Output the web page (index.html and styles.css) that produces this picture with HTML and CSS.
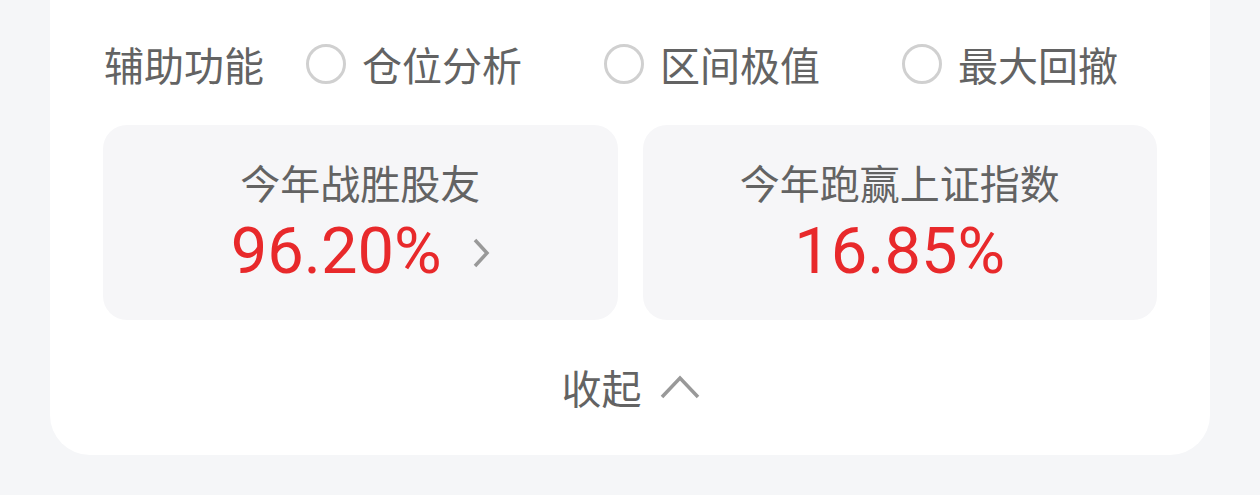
FILE: index.html
```html
<!DOCTYPE html>
<html lang="zh-CN">
<head>
    <meta charset="UTF-8">
    <meta name="viewport" content="width=device-width, initial-scale=1.0">
    <title>收益分析</title>
    <link rel="stylesheet" href="styles.css">
</head>
<body>

    <div class="card">
        <div class="aux-row">
            <span class="aux-label">辅助功能</span>
            <label class="option"><span class="radio"></span><span>仓位分析</span></label>
            <label class="option"><span class="radio"></span><span>区间极值</span></label>
            <label class="option"><span class="radio"></span><span>最大回撤</span></label>
        </div>

        <div class="stats">
            <div class="stat-box">
                <div class="stat-title">今年战胜股友</div>
                <div class="stat-value">
                    <span class="num">96.20%</span>
                    <svg class="arrow" width="18" height="30" viewBox="0 0 18 30">
                        <polyline points="3,2 15,15 3,28" fill="none" stroke="#999" stroke-width="3.5"/>
                    </svg>
                </div>
            </div>
            <div class="stat-box">
                <div class="stat-title">今年跑赢上证指数</div>
                <div class="stat-value">
                    <span class="num">16.85%</span>
                </div>
            </div>
        </div>

        <div class="collapse">
            <span>收起</span>
            <svg width="40" height="24" viewBox="0 0 40 24">
                <polyline points="2,22 20,3 38,22" fill="none" stroke="#999" stroke-width="3.5"/>
            </svg>
        </div>
    </div>

</body>
</html>
```

FILE: styles.css
```css
body {
    margin: 0;
    background-color: #f5f6f8;
    font-family: "Noto Sans CJK SC", "Noto Sans", sans-serif;
    color: #636363;
}
.card {
    margin: 0 50px;
    padding: 44px 53px 44px 54px;
    background-color: #fff;
    border-radius: 0 0 40px 40px;
}
.aux-row {
    display: flex;
    align-items: center;
    height: 40px;
    font-size: 40px;
    line-height: 40px;
    white-space: nowrap;
}
.aux-label {
    flex-shrink: 0;
    width: 160px;
    margin-right: 42px;
}
.option {
    flex-shrink: 0;
    display: flex;
    align-items: center;
    gap: 16px;
    width: 298px;
}
.option:last-child {
    width: auto;
}
.radio {
    flex-shrink: 0;
    width: 34px;
    height: 34px;
    border: 3px solid #d0d0d0;
    border-radius: 50%;
}
.stats {
    display: grid;
    grid-template-columns: 1fr 1fr;
    gap: 25px;
    margin-top: 41px;
    margin-left: -1px;
}
.stat-box {
    height: 195px;
    background-color: #f6f6f8;
    border-radius: 24px;
    display: flex;
    flex-direction: column;
    align-items: center;
}
.stat-title {
    margin-top: 33px;
    font-size: 40px;
    line-height: 48px;
}
.stat-value {
    margin-top: 12px;
    display: flex;
    align-items: center;
    gap: 30px;
    height: 66px;
}
.num {
    font-family: Roboto, "Liberation Sans", sans-serif;
    font-weight: 400;
    font-size: 65px;
    line-height: 66px;
    color: #e8292b;
}
.arrow {
    margin-top: 4px;
}
.collapse {
    margin-top: 43px;
    height: 48px;
    display: flex;
    align-items: center;
    justify-content: center;
    gap: 18px;
    font-size: 40px;
    line-height: 48px;
}
```
